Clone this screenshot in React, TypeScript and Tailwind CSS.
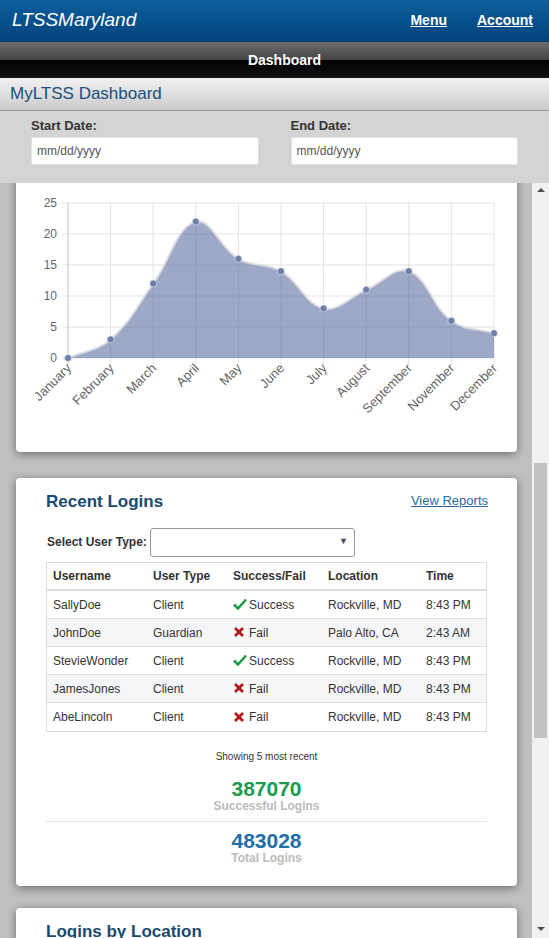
import React from "react";

const MONTHS = ["January", "February", "March", "April", "May", "June", "July", "August", "September", "November", "December"];
const VALUES = [0, 3, 12, 22, 16, 14, 8, 11, 14, 6, 4];

const LOGINS = [
  { user: "SallyDoe", type: "Client", ok: true, loc: "Rockville, MD", time: "8:43 PM" },
  { user: "JohnDoe", type: "Guardian", ok: false, loc: "Palo Alto, CA", time: "2:43 AM" },
  { user: "StevieWonder", type: "Client", ok: true, loc: "Rockville, MD", time: "8:43 PM" },
  { user: "JamesJones", type: "Client", ok: false, loc: "Rockville, MD", time: "8:43 PM" },
  { user: "AbeLincoln", type: "Client", ok: false, loc: "Rockville, MD", time: "8:43 PM" },
];

const X0 = 68;
const STEP = 42.6;
const Y0 = 358;
const UNIT = 6.2;

function buildCurve(pts: { x: number; y: number }[]) {
  // bezier like chart.js tension 0.4
  const t = 0.4;
  const cps = pts.map((p, i) => {
    const prev = pts[i - 1] ?? p;
    const next = pts[i + 1] ?? p;
    const d01 = Math.hypot(p.x - prev.x, p.y - prev.y);
    const d12 = Math.hypot(next.x - p.x, next.y - p.y);
    const sum = d01 + d12 || 1;
    const fa = (t * d01) / sum;
    const fb = (t * d12) / sum;
    return {
      inX: p.x - fa * (next.x - prev.x),
      inY: p.y - fa * (next.y - prev.y),
      outX: p.x + fb * (next.x - prev.x),
      outY: p.y + fb * (next.y - prev.y),
    };
  });
  let d = `M${pts[0].x},${pts[0].y}`;
  for (let i = 1; i < pts.length; i++) {
    d += ` C${cps[i - 1].outX},${cps[i - 1].outY} ${cps[i].inX},${cps[i].inY} ${pts[i].x},${pts[i].y}`;
  }
  return d;
}

function LoginChart() {
  const pts = VALUES.map((v, i) => ({ x: X0 + i * STEP, y: Y0 - v * UNIT }));
  const curve = buildCurve(pts);
  const last = pts[pts.length - 1];
  const area = `${curve} L${last.x},${Y0} L${X0},${Y0} Z`;
  return (
    <svg width="501" height="279" className="block">
      <g transform="translate(-16,-173)" fontFamily="'Liberation Sans', Arial, sans-serif">
        {[0, 5, 10, 15, 20, 25].map((v) => (
          <g key={v}>
            <line x1={62} x2={494} y1={Y0 - v * UNIT} y2={Y0 - v * UNIT} stroke="#e3e3e3" strokeWidth="1" />
            <text x={57} y={Y0 - v * UNIT + 4} textAnchor="end" fontSize="12" fill="#666">{v}</text>
          </g>
        ))}
        {pts.map((p, i) => (
          <line key={i} x1={p.x} x2={p.x} y1={203} y2={364} stroke={i === 0 ? "#c4c4c4" : "#e3e3e3"} strokeWidth="1" />
        ))}
        <path d={area} fill="rgba(59,83,141,0.5)" />
        <path d={curve} fill="none" stroke="rgba(220,220,226,0.9)" strokeWidth="2" />
        {pts.map((p, i) => (
          <circle key={i} cx={p.x} cy={p.y} r="3.5" fill="#6e80aa" stroke="rgba(255,255,255,0.5)" strokeWidth="1" />
        ))}
        {MONTHS.map((m, i) => (
          <text key={m} transform={`translate(${X0 + i * STEP + 4},${369}) rotate(-45)`} textAnchor="end" fontSize="13" fill="#666">
            {m}
          </text>
        ))}
      </g>
    </svg>
  );
}

function CheckIcon() {
  return (
    <svg width="14" height="12" viewBox="0 0 14 12" className="inline-block mr-[2px] -mt-[2px] align-middle">
      <path d="M1 6.5 L5 10.5 L13 1.5" fill="none" stroke="#1f9a4a" strokeWidth="2.6" strokeLinejoin="round" />
    </svg>
  );
}

function CrossIcon() {
  return (
    <svg width="12" height="12" viewBox="0 0 12 12" className="inline-block mr-[4px] -mt-[2px] align-middle">
      <path d="M2 2 L10 10 M10 2 L2 10" fill="none" stroke="#b3191c" strokeWidth="2.8" />
    </svg>
  );
}

function RecentLogins() {
  return (
    <div className="mt-[26px] bg-white rounded-[4px] shadow-[0_2px_10px_rgba(0,0,0,0.45)] px-[30px] pt-[13px] pb-[21px]">
      <div className="flex items-center justify-between h-[22px]">
        <h2 className="text-[17px] font-bold text-[#1a4a6e] leading-[22px]">Recent Logins</h2>
        <a className="text-[13px] text-[#2a6aa0] underline -mt-[3px] mr-[-1px]">View Reports</a>
      </div>

      <div className="flex items-center mt-[15px] h-[28px] pl-[1px]">
        <span className="text-[12px] font-bold text-[#333] mr-[3px]">Select User Type:</span>
        <div className="w-[205px] h-[29px] border border-[#999] rounded-[3px] bg-white flex items-center justify-end pr-[6px]">
          <span className="text-[9px] text-[#444]">▼</span>
        </div>
      </div>

      <div className="mt-[6px] border border-[#dddddd] text-[12px] text-[#333]">
        <div className="flex h-[28px] items-center border-b-2 border-[#dddddd] font-bold">
          <div className="w-[100px] px-[6px]">Username</div>
          <div className="w-[80px] px-[6px]">User Type</div>
          <div className="w-[95px] px-[6px]">Success/Fail</div>
          <div className="w-[98px] px-[6px]">Location</div>
          <div className="flex-1 px-[6px]">Time</div>
        </div>
        {LOGINS.map((r, i) => (
          <div key={r.user} className={`flex h-[28px] items-center ${i < LOGINS.length - 1 ? "border-b border-[#dddddd]" : ""} ${i % 2 === 1 ? "bg-[#f5f6f8]" : "bg-white"}`}>
            <div className="w-[100px] px-[6px]">{r.user}</div>
            <div className="w-[80px] px-[6px]">{r.type}</div>
            <div className="w-[95px] px-[6px] whitespace-nowrap">
              {r.ok ? <CheckIcon /> : <CrossIcon />}
              {r.ok ? "Success" : "Fail"}
            </div>
            <div className="w-[98px] px-[6px] whitespace-nowrap">{r.loc}</div>
            <div className="flex-1 px-[6px]">{r.time}</div>
          </div>
        ))}
      </div>

      <p className="mt-[19px] text-center text-[10px] leading-[12px] text-[#333]">Showing 5 most recent</p>
      <div className="mt-[15px] text-center">
        <div className="text-[21px] leading-[22px] font-bold text-[#1c9a4e]">387070</div>
        <div className="text-[12px] leading-[13px] font-bold text-[#bbbbbb]">Successful Logins</div>
      </div>
      <div className="mt-[8px] h-px bg-[#e5e5e5]" />
      <div className="mt-[8px] text-center">
        <div className="text-[21px] leading-[22px] font-bold text-[#1f6ea8]">483028</div>
        <div className="text-[12px] leading-[13px] font-bold text-[#bbbbbb]">Total Logins</div>
      </div>
    </div>
  );
}

export default function App() {
  return (
    <div className="w-[549px] h-[938px] overflow-hidden flex flex-col font-['Liberation_Sans',Arial,sans-serif]">
      {/* top bar */}
      <div className="h-[42px] shrink-0 flex items-center justify-between pl-[12px] pr-[16px] bg-gradient-to-b from-[#0b5e9d] to-[#04447c] border-b border-[#043a69]">
        <span className="text-[19px] italic text-white">LTSSMaryland</span>
        <div className="flex items-center gap-[30px] text-[14px] font-bold text-white">
          <a className="underline">Menu</a>
          <a className="underline">Account</a>
        </div>
      </div>
      <div className="h-[36px] shrink-0 relative flex items-center justify-center pl-[20px] bg-[linear-gradient(#6c6c6c_0%,#454545_50%,#000_50%,#121212_100%)]">
        <span className="text-[14px] font-bold text-white">Dashboard</span>
      </div>
      <div className="h-[33px] shrink-0 flex items-center pl-[10px] bg-gradient-to-b from-[#f2f2f2] to-[#cbcbcb] border-b border-[#999]">
        <span className="text-[17px] text-[#1c4f7d]">MyLTSS Dashboard</span>
      </div>

      {/* date filters */}
      <div className="h-[72px] shrink-0 bg-[#d4d4d4] grid grid-cols-2 gap-[32px] pl-[31px] pr-[31px] pt-[7px]">
        {["Start Date:", "End Date:"].map((l) => (
          <div key={l}>
            <div className="text-[13px] font-bold text-[#333] leading-[15px]">{l}</div>
            <div className="mt-[4px] h-[28px] bg-white rounded-[2px] border border-[#e2e2e2] flex items-center pl-[5px] text-[12px] text-[#555]">
              mm/dd/yyyy
            </div>
          </div>
        ))}
      </div>

      {/* scrolling content */}
      <div className="flex-1 flex min-h-0">
        <div className="flex-1 overflow-hidden bg-[#c0c0c0] pl-[16px] pr-[15px]">
          <div className="-mt-[10px] h-[279px] bg-white rounded-[4px] shadow-[0_2px_10px_rgba(0,0,0,0.45)]">
            <LoginChart />
          </div>
          <RecentLogins />
          <div className="mt-[22px] bg-white rounded-[4px] shadow-[0_2px_10px_rgba(0,0,0,0.45)] px-[30px] pt-[13px] h-[120px]">
            <h2 className="text-[17px] font-bold text-[#1a4a6e] leading-[22px]">Logins by Location</h2>
          </div>
        </div>
        <div className="w-[17px] bg-[#f1f1f1] flex flex-col items-center">
          <div className="mt-[5px] w-0 h-0 border-l-[4px] border-r-[4px] border-b-[4px] border-l-transparent border-r-transparent border-b-[#505050]" />
          <div className="mt-[271px] w-[13px] h-[275px] bg-[#c1c1c1]" />
          <div className="mt-auto mb-[7px] w-0 h-0 border-l-[4px] border-r-[4px] border-t-[4px] border-l-transparent border-r-transparent border-t-[#505050]" />
        </div>
      </div>
    </div>
  );
}
